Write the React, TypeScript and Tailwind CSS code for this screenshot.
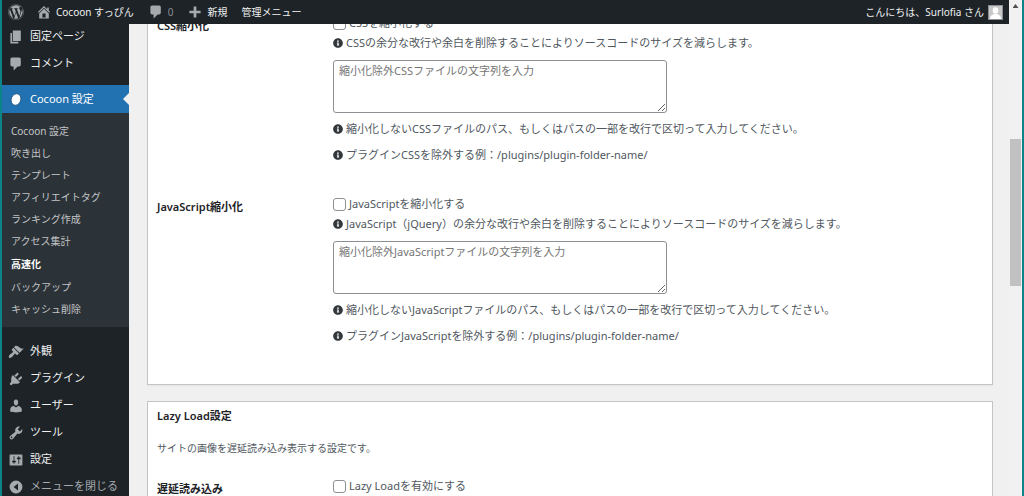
import clsx from "clsx";
import { ReactNode } from "react";
import { FaInfoCircle, FaWordpress } from "react-icons/fa";

const icons = {
  home: "M16 8.5l1.53 1.53-1.06 1.06L10 4.6l-6.47 6.49-1.06-1.06L10 2.5l4 4v-2h2v4zm-6-2.46l6 5.99V18H4v-5.97zM12 17v-5H8v5h4z",
  comment:
    "M5 2h9c1.1 0 2 .9 2 2v7c0 1.1-.9 2-2 2h-2l-5 5v-5H5c-1.1 0-2-.9-2-2V4c0-1.1.9-2 2-2z",
  plus: "M17 8.500v3.200h-5.300v5.300H8.300v-5.300H3V8.500h5.300V3.200h3.400v5.300z",
  page: "M6 15V2h10v13H6zm-1 1h8v2H3V5h2v11z",
  brush:
    "M14.48 11.06L7.41 3.99l1.5-1.5c.5-.56 2.3-.47 3.51.32 1.21.8 1.43 1.28 2.91 2.1 1.18.64 2.45 1.26 4.45.85zm-.71.71L6.7 4.7 4.93 6.47c-.39.39-.39 1.02 0 1.41l1.06 1.06c.39.39.39 1.03 0 1.42-.6.6-1.43 1.11-2.21 1.69-.35.26-.7.53-1.01.84C1.43 14.23.4 16.08 1.4 17.07c.99 1 2.84-.03 4.18-1.36.31-.31.58-.66.85-1.02.57-.78 1.08-1.61 1.69-2.21.39-.39 1.02-.39 1.41 0l1.06 1.06c.39.39 1.02.39 1.41 0z",
  plugin:
    "M13.11 4.36L9.87 7.6 8 5.73l3.24-3.24c.35-.34 1.05-.2 1.56.32.52.51.66 1.21.31 1.55zm-8 1.77l.91-1.12 9.01 9.01-1.19.84c-.71.71-2.63 1.16-3.82 1.16H6.14L4.9 17.26c-.59.59-1.54.59-2.12 0-.59-.58-.59-1.53 0-2.12l1.24-1.24v-3.88c0-1.13.4-3.19 1.09-3.89zm7.26 3.97l3.24-3.24c.34-.35 1.04-.21 1.55.31.52.51.66 1.21.31 1.55l-3.24 3.25z",
  user: "M10 9.25c-2.27 0-2.73-3.44-2.73-3.44C7 4.02 7.82 2 9.97 2c2.16 0 2.98 2.02 2.71 3.81 0 0-.41 3.44-2.68 3.44zm0 2.57L12.72 10c2.39 0 4.52 2.33 4.52 4.53v2.49s-3.65 1.13-7.24 1.13c-3.65 0-7.24-1.13-7.24-1.13v-2.49c0-2.25 1.94-4.48 4.47-4.48z",
  tool: "M16.68 9.77c-1.34 1.34-3.3 1.67-4.95.99l-5.41 6.52c-.99.99-2.59.99-3.58 0s-.99-2.59 0-3.57l6.52-5.42c-.68-1.65-.35-3.61.99-4.95 1.28-1.28 3.12-1.62 4.72-1.06l-2.89 2.89 2.82 2.82 2.86-2.87c.53 1.58.18 3.39-1.08 4.65zM3.81 16.21c.4.39 1.04.39 1.43 0 .4-.4.4-1.04 0-1.43-.39-.4-1.03-.4-1.43 0-.39.39-.39 1.03 0 1.43z",
  settings:
    "M18 16V4c0-.55-.45-1-1-1H3c-.55 0-1 .45-1 1v12c0 .55.45 1 1 1h14c.55 0 1-.45 1-1zM8 11h1c.55 0 1 .45 1 1s-.45 1-1 1H8v1.5c0 .28-.22.5-.5.5s-.5-.22-.5-.5V13H6c-.55 0-1-.45-1-1s.45-1 1-1h1V5.5c0-.28.22-.5.5-.5s.5.22.5.5V11zm5-2h-1c-.55 0-1-.45-1-1s.45-1 1-1h1V5.5c0-.28.22-.5.5-.5s.5.22.5.5V7h1c.55 0 1 .45 1 1s-.45 1-1 1h-1v5.5c0 .28-.22.5-.5.5s-.5-.22-.5-.5V9z",
  collapse: "M10 2a8 8 0 1 1 0 16 8 8 0 0 1 0-16zM12.5 5.5L7 10l5.5 4.5z",
};

type IconName = keyof typeof icons;

const subMenu = [
  "Cocoon 設定",
  "吹き出し",
  "テンプレート",
  "アフィリエイトタグ",
  "ランキング作成",
  "アクセス集計",
  "高速化",
  "バックアップ",
  "キャッシュ削除",
];

function Icon({ name }: { name: IconName }) {
  return (
    <svg
      viewBox="0 0 20 20"
      fill="currentColor"
      fillRule="evenodd"
      className="size-4 shrink-0 text-[#a7aaad]"
      aria-hidden="true"
    >
      <path d={icons[name]} />
    </svg>
  );
}

function MenuItem({ icon, label }: { icon: IconName; label: string }) {
  return (
    <a href="#" className="flex h-[27px] items-center gap-1.5 pl-1.5">
      <Icon name={icon} />
      {label}
    </a>
  );
}

function AdminBar() {
  return (
    <header className="relative z-10 flex h-6 shrink-0 items-center bg-[#1d2327] px-1.5 text-[10px] text-[#f0f0f1]">
      <a href="#" aria-label="WordPress">
        <FaWordpress className="size-4 text-[#a7aaad]" />
      </a>
      <a href="#" className="ml-3 flex items-center gap-1">
        <Icon name="home" />
        Cocoon すっぴん
      </a>
      <a href="#" className="ml-3.5 flex items-center gap-1 text-[#8c8f94]">
        <Icon name="comment" />0
      </a>
      <a href="#" className="ml-3.5 flex items-center gap-1">
        <Icon name="plus" />
        新規
      </a>
      <a href="#" className="ml-3.5">
        管理メニュー
      </a>
      <a href="#" className="ml-auto flex items-center gap-1">
        こんにちは、Surlofia さん
        <svg viewBox="0 0 15 15" className="size-[15px]" aria-hidden="true">
          <rect width="15" height="15" fill="#8c8f94" />
          <rect x="1" y="1" width="13" height="13" fill="#c8c8c8" />
          <ellipse cx="7.5" cy="5.5" rx="2.8" ry="3.2" fill="#fff" />
          <path d="M2 14c0-3.5 2.5-5 5.500-5s5.500 1.500 5.500 5z" fill="#fff" />
        </svg>
      </a>
    </header>
  );
}

function Sidebar() {
  return (
    <nav className="-mt-px w-[127px] shrink-0 bg-[#1d2327] text-[11px] text-[#f0f0f1]">
      <MenuItem icon="page" label="固定ページ" />
      <MenuItem icon="comment" label="コメント" />

      <a
        href="#"
        className="relative mt-2 flex h-7 items-center gap-1.5 bg-[#2271b1] pl-1.5 text-white"
      >
        <svg viewBox="0 0 16 16" className="size-4" aria-hidden="true">
          <ellipse
            cx="8"
            cy="8.500"
            rx="4.800"
            ry="5.900"
            transform="rotate(22 8 8.500)"
            fill="#fff"
            stroke="#1d4f7c"
            strokeWidth="0.8"
          />
        </svg>
        Cocoon 設定
        <span className="absolute right-0 h-3 w-1.5 bg-[#f0f0f1] [clip-path:polygon(100%_0,100%_100%,0_50%)]" />
      </a>
      <ul className="bg-[#2c3338] py-[7px] text-[10px]">
        {subMenu.map((item) => (
          <li
            key={item}
            className={clsx(
              "pl-[9px]",
              item === "高速化"
                ? "leading-6 font-bold text-white"
                : "leading-[22px] text-[#c3c4c7]",
            )}
          >
            <a href="#">{item}</a>
          </li>
        ))}
      </ul>

      <div className="pt-[11px]">
        <MenuItem icon="brush" label="外観" />
        <MenuItem icon="plugin" label="プラグイン" />
        <MenuItem icon="user" label="ユーザー" />
        <MenuItem icon="tool" label="ツール" />
        <MenuItem icon="settings" label="設定" />
        <button
          type="button"
          className="flex h-[27px] items-center gap-1.5 pl-1.5 text-[#a7aaad]"
        >
          <Icon name="collapse" />
          メニューを閉じる
        </button>
      </div>
    </nav>
  );
}

function Row({ title, children }: { title: string; children: ReactNode }) {
  return (
    <div className="flex">
      <h3 className="w-44 shrink-0 pt-[3px] leading-4 font-semibold text-[#1d2327]">
        {title}
      </h3>
      <div className="min-w-0 flex-1">{children}</div>
    </div>
  );
}

function Check({ label }: { label: string }) {
  return (
    <label className="flex h-4 items-center gap-[3px]">
      <input
        type="checkbox"
        className="size-[13px] appearance-none rounded-[3px] border border-[#8c8f94] bg-white"
      />
      {label}
    </label>
  );
}

function Tip({ children, className }: { children: ReactNode; className?: string }) {
  return (
    <p className={clsx("flex items-center gap-[3px] leading-4", className)}>
      <FaInfoCircle className="size-2.5 shrink-0 text-[#32373c]" />
      {children}
    </p>
  );
}

function MinifyRow({ kind, note }: { kind: string; note: string }) {
  return (
    <Row title={`${kind}縮小化`}>
      <Check label={`${kind}を縮小化する`} />
      <Tip className="mt-1">
        {note}の余分な改行や余白を削除することによりソースコードのサイズを減らします。
      </Tip>
      <textarea
        aria-label={`縮小化除外${kind}ファイル`}
        placeholder={`縮小化除外${kind}ファイルの文字列を入力`}
        className="mt-[9px] block h-[53px] w-[334px] max-w-full rounded-[3px] border border-[#8c8f94] bg-white px-[5px] py-0.5 leading-4 placeholder:text-[#757575]"
      />
      <Tip className="mt-2">
        縮小化しない{kind}
        ファイルのパス、もしくはパスの一部を改行で区切って入力してください。
      </Tip>
      <Tip className="mt-2.5">
        プラグイン{kind}を除外する例：/plugins/plugin-folder-name/
      </Tip>
    </Row>
  );
}

function Settings() {
  return (
    <main className="min-w-0 flex-1 pr-4 pl-[18px] text-[11px] text-[#50575e]">
      {/* the page is scrolled, so the first panel starts under the admin bar */}
      <section className="-mt-2.5 flex flex-col gap-[33px] border border-[#c3c4c7] bg-white px-[9px] pb-10 shadow-xs">
        <MinifyRow kind="CSS" note="CSS" />
        <MinifyRow kind="JavaScript" note="JavaScript（jQuery）" />
      </section>

      <section className="mt-4 border border-[#c3c4c7] bg-white px-[9px] pt-1.5">
        <h2 className="leading-4 font-semibold text-[#1d2327]">
          Lazy Load設定
        </h2>
        <p className="mt-4 mb-[22px] text-[10px] leading-4">
          サイトの画像を遅延読み込み表示する設定です。
        </p>
        <Row title="遅延読み込み">
          <Check label="Lazy Loadを有効にする" />
        </Row>
      </section>
    </main>
  );
}

export default function App() {
  return (
    <div
      lang="ja"
      className="flex h-screen overflow-hidden border-l-2 border-[#0b8389] bg-[#f0f0f1] font-['Noto_Sans','Noto_Sans_CJK_JP',sans-serif]"
    >
      <div className="flex min-w-0 flex-1 flex-col overflow-hidden">
        <AdminBar />
        <div className="flex min-h-0 flex-1">
          <Sidebar />
          <Settings />
        </div>
      </div>

      <div className="flex w-[15px] shrink-0 flex-col items-center border-r-2 border-[#0b8389] bg-[#f1f1f1] pt-1">
        <span className="h-1 w-1.5 bg-[#505050] [clip-path:polygon(50%_0,100%_100%,0_100%)]" />
        <span className="mt-[131px] h-[147px] w-[11px] bg-[#c1c1c1]" />
      </div>
    </div>
  );
}
